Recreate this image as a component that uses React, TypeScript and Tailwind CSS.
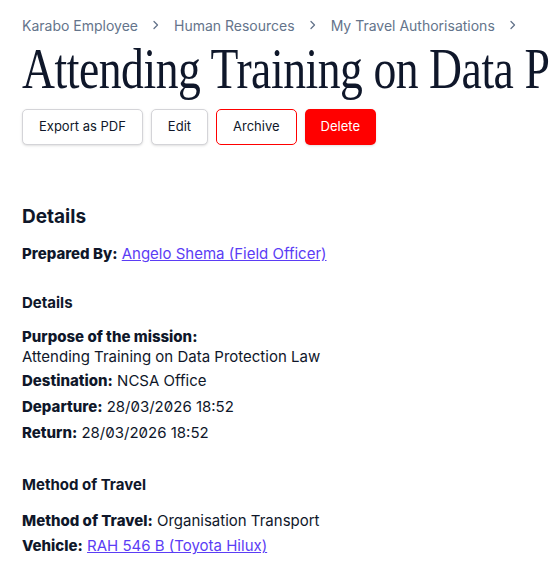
import React from "react";

const Chevron = () => (
  <svg width="8" height="10" viewBox="0 0 8 10" fill="none" className="shrink-0">
    <path d="M2 1.5 L5.5 5 L2 8.5" stroke="#64748b" strokeWidth="1.3" strokeLinecap="round" strokeLinejoin="round" />
  </svg>
);

const Label = ({ children }: { children: React.ReactNode }) => (
  <span className="font-extrabold text-[#0f172a]">{children}</span>
);

export default function App() {
  return (
    <div className="font-['Inter',sans-serif] bg-white w-[549px] h-[567px] overflow-hidden text-[#0f172a]">
      <div className="px-[22px] pt-[14px]">
        <nav className="flex items-center gap-[14px] text-[14px] text-[#64748b] whitespace-nowrap h-[22px]">
          <span>Karabo Employee</span>
          <Chevron />
          <span>Human Resources</span>
          <Chevron />
          <span>My Travel Authorisations</span>
          <Chevron />
        </nav>
        <h1 className="font-['Liberation_Serif',serif] text-[56px] leading-[64px] mt-[1px] whitespace-nowrap tracking-[-0.01em] text-[#0f172a] scale-x-[0.815] origin-left">
          Attending Training on Data Protection Law
        </h1>
        <div className="flex gap-2 mt-[8px] text-[13px]">
          <button className="h-[36px] px-4 rounded-[5px] border border-[#d4d4d8] bg-white text-[#0f172a] shadow-sm">Export as PDF</button>
          <button className="h-[36px] px-4 rounded-[5px] border border-[#d4d4d8] bg-white text-[#0f172a] shadow-sm">Edit</button>
          <button className="h-[36px] px-4 rounded-[5px] border border-[#ff0000] bg-white text-[#0f172a]">Archive</button>
          <button className="h-[36px] px-4 rounded-[5px] bg-[#ff0000] text-white shadow-sm">Delete</button>
        </div>

        <h2 className="text-[19px] font-bold mt-[60px] leading-[24px]">Details</h2>
        <p className="text-[15px] mt-[15px] leading-[20px]">
          <Label>Prepared By:</Label>{" "}
          <a href="#" className="text-[#5b3df5] underline">Angelo Shema (Field Officer)</a>
        </p>

        <h3 className="text-[15px] font-bold mt-[29px] leading-[20px]">Details</h3>
        <div className="mt-[14px] text-[15px] leading-[20px] [font-feature-settings:'zero']">
          <p><Label>Purpose of the mission:</Label></p>
          <p>Attending Training on Data Protection Law</p>
          <p className="mt-[4px]"><Label>Destination:</Label> NCSA Office</p>
          <p className="mt-[6px]"><Label>Departure:</Label> 28/03/2026 18:52</p>
          <p className="mt-[6px]"><Label>Return:</Label> 28/03/2026 18:52</p>
        </div>

        <h3 className="text-[15px] font-bold mt-[32px] leading-[20px]">Method of Travel</h3>
        <div className="mt-[16px] text-[15px] leading-[20px]">
          <p><Label>Method of Travel:</Label> Organisation Transport</p>
          <p className="mt-[5px]"><Label>Vehicle:</Label>{" "}
            <a href="#" className="text-[#5b3df5] underline">RAH 546 B (Toyota Hilux)</a>
          </p>
        </div>
      </div>
    </div>
  );
}
